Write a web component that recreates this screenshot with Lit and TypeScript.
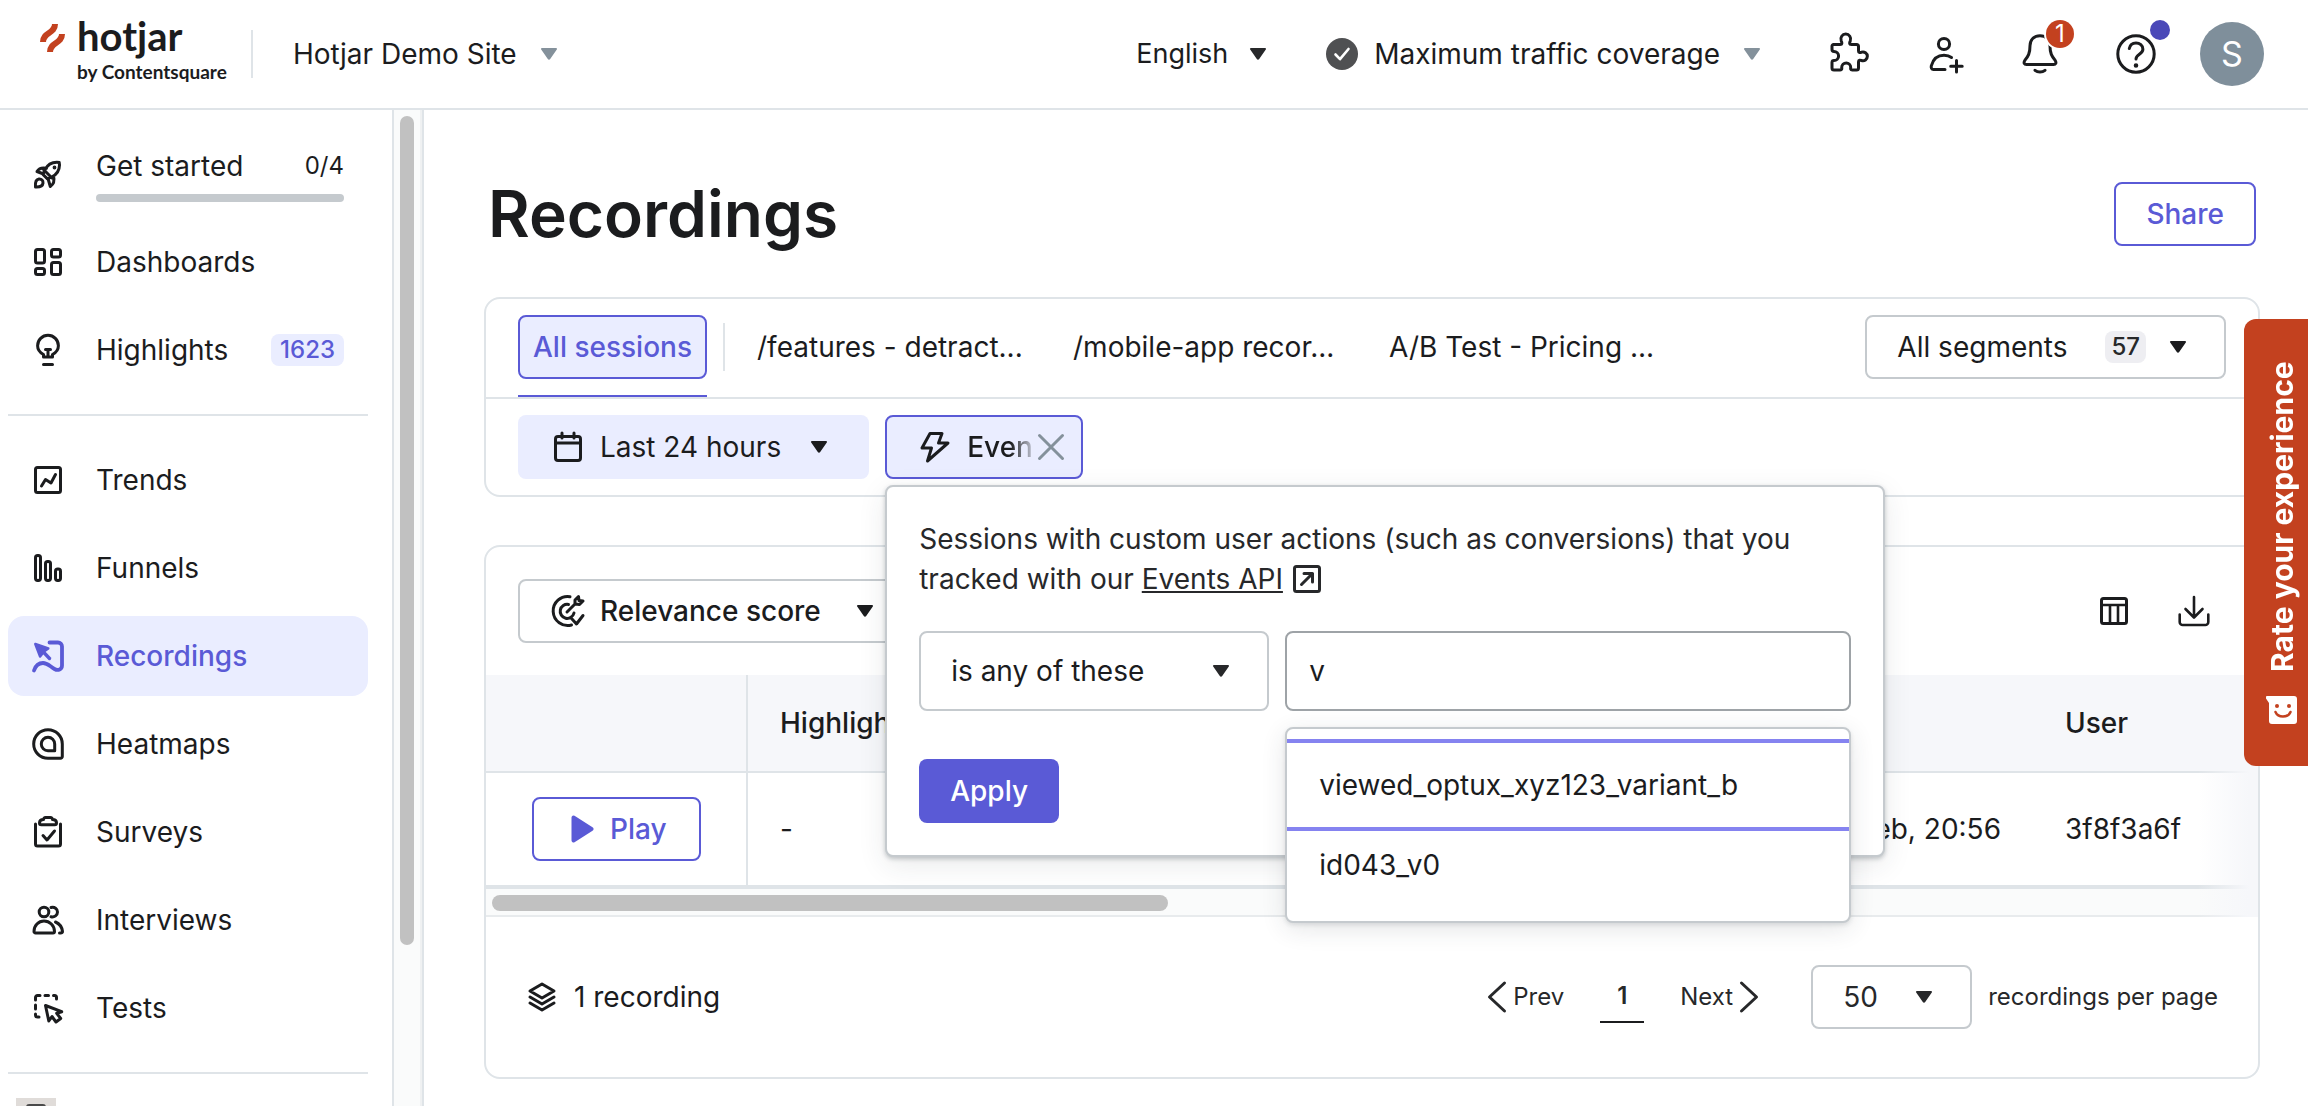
import { LitElement, html, css, svg, nothing } from "lit";
import type { TemplateResult } from "lit";
import { customElement } from "lit/decorators.js";
import { classMap } from "lit/directives/class-map.js";

const icons: Record<string, TemplateResult> = {
  rocket: svg`<g transform="translate(-1 -3)"><path d="M12 17.500c1.500-5 5-10.500 10-11.800 2-.5 4.500-.7 6.200-.2.6 1.800.3 4.200-.2 6.200-1.300 5-6.300 8.500-11.500 10.200zM12.500 17 6 14.500c1.800-3 5.500-4 9.500-3.200M17 21.500l2.300 8c3-2 4.500-5.500 3.200-10.500M12.500 12.500l8.500 8.500"/><path d="M4.500 30c-.4-4 .2-7.500 3.500-8 2.500-.2 4.200 1.700 4 4-.3 3-3.500 4.200-7.500 4z"/><circle cx="23.500" cy="10.500" r="1.300" fill="currentColor" stroke-width="1.200"/></g>`,
  dashboards: svg`<rect x="3.500" y="3.500" width="9" height="13.500" rx="2"/><rect x="19.500" y="3.500" width="9" height="7.500" rx="2"/><rect x="3.500" y="22.500" width="9" height="6" rx="2"/><rect x="19.500" y="16.500" width="9" height="12" rx="2"/>`,
  bulb: svg`<path d="M11.500 23v-2.500C8 18.500 5.600 15.500 5.600 11.700a10.400 10.400 0 0 1 20.800 0c0 3.800-2.400 6.800-5.900 8.800V23zM13.500 15.500h5M16 15.500V23M11.500 30.500h9"/>`,
  trends: svg`<rect x="3.500" y="3.500" width="25" height="25" rx="2"/><path d="m9.500 22 4-6.500 5.500 3.500 4.500-8.500"/>`,
  funnels: svg`<rect x="3.500" y="3.500" width="5" height="25" rx="2.200"/><rect x="13.500" y="9.500" width="5" height="19" rx="2.200"/><rect x="23.500" y="17" width="5" height="11.500" rx="2.200"/>`,
  recordings: svg`<path d="M17.500 2.500H26a4 4 0 0 1 4 4v19c0 4-4 5.500-7.500 3.500-5-3-7-6-11.500-6-5 0-7.500 3-9 7.500" stroke-width="3.800"/><path d="m3.300 4 13 4.500-4 2.800-4.200 5.200z" fill="currentColor" stroke-width="2.500"/><path d="m10 10.500 7.500 8" stroke-width="3.400"/>`,
  heatmaps: svg`<path d="M30.300 16v12.500a1.800 1.800 0 0 1-1.800 1.800H16A14.300 14.300 0 1 1 30.300 16z"/><path d="M22.700 16v6.700H16A6.700 6.700 0 1 1 22.700 16z"/>`,
  surveys: svg`<path d="M3.500 8v20a2 2 0 0 0 2 2h21a2 2 0 0 0 2-2V8M11.500 3.500c0-1 1-2 2-2h5c1 0 2 1 2 2 2.500 0 4 1.200 4 3.500 0 1-.7 1.800-1.800 1.800H9.300c-1.100 0-1.800-.8-1.800-1.800 0-2.300 1.500-3.500 4-3.500zM11 19.500l4 4.500 7.500-9"/>`,
  interviews: svg`<circle cx="12" cy="8" r="4.800"/><path d="M2 27.500c0-6 4.500-10.500 10-10.500s10.500 4.500 10.500 10.500c0 .8-.7 1.500-1.500 1.500H3.500C2.700 29 2 28.300 2 27.500zM19 3.500c3.500-1 6.500 1.300 6.500 4.500S22.500 13.500 19 12.800M23.500 18c3.500 1.500 6.500 5 7 9.500.1 1-.7 1.500-1.700 1.500h-1.300"/>`,
  tests: svg`<path d="M3.500 8V5.500a2 2 0 0 1 2-2H8M13 3.500h3.500M21.500 3.500h1a2 2 0 0 1 2 2V7M3.500 13v4M3.500 22v1a2 2 0 0 0 2 2h1.500"/><path d="m13.500 13.500 3.300 15.500 3.200-4.500 4 5.500 4.700-3.500-4-5.200 5-1.600z"/>`,
  calendar: svg`<rect x="3.500" y="5.500" width="25" height="24" rx="2.500"/><path d="M3.500 12h25M10 2v5M22 2v5"/>`,
  bolt: svg`<path d="M11 2.500h12l-3.500 9.500H29L8.500 30l4-13H3z"/>`,
  close: svg`<path d="m4.500 4.500 23 23M27.500 4.500l-23 23"/>`,
  target: svg`<path d="M18 1.700A14.500 14.500 0 1 0 19.500 30M16.500 9.500a7 7 0 1 0 5.500 8.500M15 17l8.500-8.500M23 9V5l3.500-3.500.5 4 4 .5L27.500 9.500zM20 24l4.500 5L31 20.500"/>`,
  external: svg`<rect x="3.500" y="3.500" width="25" height="25" rx="2"/><path d="m10.500 21.500 11-11M13 10.500h8.500V19" stroke-width="3"/>`,
  columns: svg`<rect x="3.500" y="3.500" width="25" height="25" rx="2"/><path d="M3.500 10h25M12 10v18.500M20 10v18.500" stroke-width="2.600"/>`,
  download: svg`<path d="M1.700 19.500V27a3 3 0 0 0 3 3h22.600a3 3 0 0 0 3-3v-7.500M16 2v20M7.500 14l8.500 8.500 8.500-8.500" stroke-width="2.600"/>`,
  play: svg`<path d="M6.500 4.500v23a1 1 0 0 0 1.500.8l18-11.300c.8-.5.800-1.500 0-2L8 3.700a1 1 0 0 0-1.500.8z" fill="currentColor" stroke-width="2"/>`,
  layers: svg`<path d="m16 3 12 7-12 7-12-7zM4 16l12 7 12-7M4 22l12 7 12-7"/>`,
  prev: svg`<path d="M23.500 2 8.500 16l15 14"/>`,
  next: svg`<path d="m8.500 2 15 14-15 14"/>`,
  caret: svg`<path d="M9 10h14c1 0 1.300.8.800 1.500l-6.600 9.500c-.6.900-1.800.9-2.400 0L8.200 11.500C7.700 10.800 8 10 9 10z" fill="currentColor" stroke="none"/>`,
  puzzle: svg`<path d="M5.500 10.500H12c2.500 0 2-2 1.200-3.700a4.900 4.900 0 1 1 9.100 0c-.8 1.700-1.300 3.700 1.200 3.700h5a2 2 0 0 1 2 2V17c0 2 1.500 1.600 3 1.200a4.400 4.400 0 1 1 0 8.300c-1.500-.5-3-.9-3 1.500v6a2 2 0 0 1-2 2h-4.300c-2 0-1.600-1.500-1.500-2.500a4.500 4.500 0 0 0-9 0c.1 1 .5 2.500-1.500 2.500H6a2 2 0 0 1-2-2v-5.500c0-2 1-1.900 2-1.900a4.600 4.600 0 0 0 0-9.200c-1 0-2 0-2-1.900V12a1.500 1.500 0 0 1 1.500-1.500z"/>`,
  addUser: svg`<circle cx="20" cy="10" r="5.600"/><path d="M27.500 23.500c-2-1.500-4.500-2.200-7.500-2.200-7 0-11 4.500-12.700 10.500-.4 1.700.2 3.700 2.200 3.700H21M32.500 26.500v11.500M26.700 32.300h11.500"/>`,
  bell: svg`<path d="M20 1.700c6 0 10 4 10 10 0 8 2 10.500 5 14.500 1.800 2.600.7 4.300-1.500 4.300h-27c-2.200 0-3.300-1.700-1.500-4.300 3-4 5-6.500 5-14.500 0-6 4-10 10-10zM15 36.300c2.800 2.400 7.200 2.400 10 0"/>`,
  help: svg`<circle cx="20" cy="20" r="18.200"/><path d="M13.300 14.500c.7-3.500 3.300-5.500 6.700-5.500 3.700 0 6.900 2.500 6.900 6.200 0 5-6.900 5-6.900 9.800"/><circle cx="20" cy="31.500" r="1.300" fill="currentColor" stroke-width="2"/>`,
  check: svg`<circle cx="16" cy="16" r="16" fill="#4f5052" stroke="none"/><path d="m9.500 16.500 4.500 4.700L22.500 11" stroke="#fff" stroke-width="2.600"/>`,
};

const icon = (name: string, size = 32, cls = "") => html`
  <svg class="icon ${cls}" viewBox="0 0 ${size} ${size}" width=${size} height=${size}
    fill="none" stroke="currentColor" stroke-width="3" stroke-linecap="round" stroke-linejoin="round" aria-hidden="true">${icons[name]}</svg>`;

interface NavItem { label: string; icon: string; badge?: string; active?: boolean; }

const overview: NavItem[] = [
  { label: "Dashboards", icon: "dashboards" },
  { label: "Highlights", icon: "bulb", badge: "1623" },
];
const products: NavItem[] = [
  { label: "Trends", icon: "trends" },
  { label: "Funnels", icon: "funnels" },
  { label: "Recordings", icon: "recordings", active: true },
  { label: "Heatmaps", icon: "heatmaps" },
  { label: "Surveys", icon: "surveys" },
  { label: "Interviews", icon: "interviews" },
  { label: "Tests", icon: "tests" },
];
const segments = ["/features - detract...", "/mobile-app recor...", "A/B Test - Pricing ..."];

const base = css`
  * { box-sizing: border-box; }
  button, select, input { font: inherit; color: inherit; margin: 0; }
  button { background: none; border: 0; padding: 0; cursor: pointer; display: flex; align-items: center; white-space: nowrap; }
  a { color: inherit; }
  .icon { display: block; flex: none; overflow: visible; }
  .select { display: grid; align-items: center; }
  .select select, .select .icon { grid-area: 1 / 1; }
  .select .icon { justify-self: end; pointer-events: none; color: #27282a; }
  .select select { appearance: none; background: #fff; border: 0; padding: 0; width: 100%; outline: none; }
  .select.boxed select { height: 64px; border: 2px solid #c5cace; border-radius: 8px; padding: 0 92px 0 30px; }
  .select.boxed .icon { margin-right: 32px; }
`;

@customElement("app-header")
export class AppHeader extends LitElement {
  static styles = [base, css`
    :host { display: block; flex: none; }
    .bar { height: 110px; border-bottom: 2px solid #dfe4e8; display: flex; align-items: center; padding: 0 44px 0 40px; white-space: nowrap; }
    .logo { display: flex; gap: 11px; text-decoration: none; font-family: Lato, "Open Sans", sans-serif; font-weight: 700; padding-bottom: 4px; }
    .logo svg { margin-top: 7px; flex: none; }
    .words { display: flex; flex-direction: column; width: 150px; }
    .name { font-size: 40px; line-height: 40px; }
    .by { font-size: 19px; line-height: 32px; }
    .rule { width: 2px; height: 48px; background: #dfe4e8; margin: 0 40px 0 24px; }
    .drop { gap: 16px; }
    .grey { color: #84919b; }
    .right { margin-left: auto; display: flex; align-items: center; }
    .language { width: 138px; margin-right: 52px; font-size: 27px; }
    .tools { display: flex; gap: 56px; margin: 0 44px 0 60px; }
    .tool { position: relative; }
    .count { position: absolute; left: 26px; top: -14px; width: 28px; height: 28px; border-radius: 50%; background: #c3411f; color: #fff; font-size: 24px; line-height: 28px; text-align: center; box-shadow: 0 0 0 2px #fff; }
    .dot { position: absolute; left: 34px; top: -14px; width: 20px; height: 20px; border-radius: 50%; background: #4a48b8; }
    .avatar { width: 64px; height: 64px; border-radius: 50%; background: #7f8f9b; color: #fff; font-size: 34px; justify-content: center; }
  `];
  render() {
    return html`
      <header class="bar">
        <a class="logo" href="#home">
          <svg width="26" height="30" viewBox="0 0 26 30" fill="none" stroke="#c3411f" stroke-width="6" aria-hidden="true">
            <path d="M3 19C3 9 15 11 15 1"/><path d="M10 29c0-10 12-8 12-18"/>
          </svg>
          <span class="words"><span class="name">hotjar</span><span class="by">by Contentsquare</span></span>
        </a>
        <span class="rule"></span>
        <button class="drop">Hotjar Demo Site ${icon("caret", 32, "grey")}</button>
        <div class="right">
          <div class="select language"><select aria-label="Language"><option>English</option></select>${icon("caret")}</div>
          <button class="drop">${icon("check")}Maximum traffic coverage ${icon("caret", 32, "grey")}</button>
          <div class="tools">
            <button class="tool" aria-label="Integrations">${icon("puzzle", 40)}</button>
            <button class="tool" aria-label="Invite people">${icon("addUser", 40)}</button>
            <button class="tool" aria-label="Notifications">${icon("bell", 40)}<span class="count">1</span></button>
            <button class="tool" aria-label="Help">${icon("help", 40)}<span class="dot"></span></button>
          </div>
          <button class="avatar">S</button>
        </div>
      </header>`;
  }
}

@customElement("app-sidebar")
export class AppSidebar extends LitElement {
  static styles = [base, css`
    :host { display: flex; flex: none; width: 424px; overflow: hidden; border-right: 2px solid #dfe4e8; }
    nav { flex: 1; min-width: 0; padding: 24px 24px 0 8px; display: flex; flex-direction: column; gap: 8px; }
    .item { flex: none; height: 80px; border-radius: 16px; padding: 0 24px; display: flex; align-items: center; gap: 32px; text-decoration: none; }
    .item.active { background: #eaedff; color: #5a5ad6; font-weight: 500; }
    .start { padding: 16px 24px 12px; }
    .progress { flex: 1; display: flex; flex-direction: column; gap: 12px; }
    .line { display: flex; justify-content: space-between; align-items: center; line-height: 32px; }
    .small { font-size: 24px; }
    .meter { height: 8px; border-radius: 4px; background: #c5cace; }
    .badge { margin-left: auto; height: 32px; line-height: 32px; padding: 0 9px; border-radius: 8px; background: #eaedff; color: #5a5ad6; font-size: 24px; font-weight: 500; }
    .divider { flex: none; height: 2px; background: #dfe4e8; margin: 16px 0; }
    .thumb { display: block; flex: none; margin-left: 8px; }
    .track { width: 30px; border-left: 2px solid #dfe4e8; border-right: 2px solid #eff1f2; background: #fafbfb; padding: 6px; }
    .handle { height: calc(100% - 155px); border-radius: 8px; background: #c1c1c1; }
  `];
  private item(n: NavItem) {
    return html`<a class=${classMap({ item: true, active: !!n.active })} href="#${n.label.toLowerCase()}">
      ${icon(n.icon)}<span>${n.label}</span>${n.badge ? html`<span class="badge">${n.badge}</span>` : nothing}</a>`;
  }
  render() {
    return html`
      <nav aria-label="Main">
        <a class="item start" href="#get-started">
          ${icon("rocket")}
          <span class="progress"><span class="line"><span>Get started</span><span class="small">0/4</span></span><span class="meter"></span></span>
        </a>
        ${overview.map((n) => this.item(n))}
        <div class="divider"></div>
        ${products.map((n) => this.item(n))}
        <div class="divider"></div>
        <svg class="thumb" width="40" height="40" viewBox="0 0 40 40" aria-hidden="true"><path fill="#e0dcd9" d="M0 0h40v40H0z"/><rect x="10" y="6" width="20" height="30" rx="3" fill="#4a4a4a"/></svg>
      </nav>
      <div class="track"><div class="handle"></div></div>`;
  }
}

@customElement("event-popover")
export class EventPopover extends LitElement {
  static styles = [base, css`
    :host { display: block; padding: 32px; background: #fff; border: 2px solid #c5cace; border-radius: 8px; box-shadow: 0 2px 4px rgba(40, 50, 60, .25), 0 8px 28px rgba(40, 50, 60, .1); color: #1b1c1e; }
    p { margin: 0 0 32px; line-height: 40px; color: #27282a; }
    p .icon { display: inline-block; vertical-align: -6px; }
    .fields { display: flex; gap: 16px; margin-bottom: 48px; }
    .select { flex: 0 0 350px; }
    .select.boxed select { height: 80px; }
    .box { flex: 1; position: relative; }
    input { width: 100%; height: 80px; border: 2px solid #9ea3a7; border-radius: 8px; padding: 0 22px; background: #fff; outline: none; display: block; }
    ul { position: absolute; left: 0; right: 0; top: 96px; margin: 0; padding: 16px 0; list-style: none; overflow: hidden; background: #fff; border: 2px solid #c5cace; border-radius: 8px; box-shadow: 0 2px 4px rgba(40, 50, 60, .12), 0 6px 24px rgba(40, 50, 60, .12); }
    li { height: 80px; line-height: 80px; padding: 0 32px; }
    li.current { outline: 4px solid #8583f0; outline-offset: 2px; }
    .apply { height: 64px; padding: 0 31px; border-radius: 8px; background: #5a5ad6; color: #fff; font-weight: 500; }
  `];
  render() {
    return html`
      <p>Sessions with custom user actions (such as conversions) that you tracked with our <a href="#events-api">Events API</a> ${icon("external")}</p>
      <div class="fields">
        <div class="select boxed"><select aria-label="Condition"><option>is any of these</option></select>${icon("caret")}</div>
        <div class="box">
          <input type="text" aria-label="Event name" .value=${"v"}>
          <ul role="listbox">
            <li class="current" role="option" aria-selected="true">viewed_optux_xyz123_variant_b</li>
            <li role="option" aria-selected="false">id043_v0</li>
          </ul>
        </div>
      </div>
      <button class="apply">Apply</button>`;
  }
}

@customElement("app-root")
export class AppRoot extends LitElement {
  static styles = [base, css`
    :host { display: flex; flex-direction: column; height: 100vh; overflow: hidden; position: relative; background: #fff; color: #1b1c1e; font-family: Inter, "Liberation Sans", sans-serif; font-size: 28px; line-height: 40px; }
    .body { flex: 1; min-height: 0; display: flex; }
    main { flex: 1; min-width: 0; padding: 72px 48px 0 60px; }
    .title { display: flex; align-items: center; justify-content: space-between; height: 64px; margin-bottom: 51px; padding: 0 4px; }
    h1 { margin: 0; font-size: 64px; line-height: 64px; font-weight: 600; }
    .outlined { height: 64px; border: 2px solid #5a5ad6; border-radius: 8px; color: #5a5ad6; font-weight: 500; padding: 0 30px; gap: 12px; }
    .outlined.wide { padding: 0 32px; }
    .panel { border: 2px solid #dfe4e8; border-radius: 16px; }
    .panel + .panel { margin-top: 48px; }
    .row { display: flex; align-items: center; }
    .tabs { height: 100px; padding: 0 32px 2px; border-bottom: 2px solid #dfe4e8; }
    .all { align-self: stretch; display: flex; align-items: center; border-bottom: 2px solid #5a5ad6; margin-bottom: -2px; }
    .all button { height: 64px; padding: 0 13px; border: 2px solid #5a5ad6; border-radius: 8px; background: #eaedff; color: #5a5ad6; font-weight: 500; }
    .sep { width: 2px; height: 48px; background: #dfe4e8; margin: 0 32px 0 16px; }
    .tab { width: 268px; margin-right: 48px; }
    .boxed-btn { height: 64px; border: 2px solid #c5cace; border-radius: 8px; padding: 0 30px; gap: 16px; }
    .segments { margin-left: auto; }
    .num { height: 32px; line-height: 32px; padding: 0 6px; border-radius: 8px; background: #eeeef2; color: #27282a; font-size: 24px; font-weight: 500; margin-left: 22px; }
    .filters { height: 96px; padding: 0 32px; gap: 16px; }
    .filter { height: 64px; border-radius: 8px; background: #eaedff; padding: 0 34px; gap: 16px; }
    .filter .caret { margin-left: 6px; }
    .sort .caret { margin-left: 12px; }
    .chip { position: relative; z-index: 2; }
    .chip-body { height: 64px; display: flex; align-items: center; border: 2px solid #5a5ad6; border-radius: 8px; background: #eaedff; padding: 0 14px 0 32px; gap: 4px; }
    .chip-body button { gap: 16px; }
    .fade { width: 64px; overflow: hidden; font-weight: 500; -webkit-mask-image: linear-gradient(90deg, #000 68%, rgba(0, 0, 0, .25)); mask-image: linear-gradient(90deg, #000 68%, rgba(0, 0, 0, .25)); }
    .close { color: #84919b; }
    event-popover { position: absolute; left: 0; top: 70px; width: 1000px; }
    .toolbar { height: 128px; padding: 0 48px 0 32px; gap: 48px; }
    .sort { font-weight: 500; padding: 0 32px; }
    .tool-a { margin-left: auto; }
    .grid { position: relative; }
    .grid::after { content: ""; position: absolute; top: 0; right: 0; bottom: 0; width: 60px; background: linear-gradient(90deg, rgba(246, 247, 250, 0), #f6f7fa 85%); pointer-events: none; }
    table { width: 100%; table-layout: fixed; border-collapse: separate; border-spacing: 0; }
    th, td { text-align: left; padding: 0 32px; border-bottom: 2px solid #dfe4e8; white-space: nowrap; }
    th { height: 98px; background: #f6f7fa; font-weight: 500; }
    td { height: 116px; border-bottom-width: 4px; }
    .c-play { width: 262px; border-right: 2px solid #dfe4e8; padding: 0 46px; }
    .c-date { width: 240px; text-align: right; }
    .c-user { width: 225px; }
    .scroll { height: 28px; padding: 6px; background: #fafbfb; border-bottom: 2px solid #e8ebed; }
    .handle { width: 38.4%; height: 16px; border-radius: 8px; background: #c1c1c1; }
    .foot { height: 160px; padding: 0 40px; }
    .total { display: flex; align-items: center; gap: 16px; }
    .pager { margin-left: auto; display: flex; align-items: center; font-size: 24px; color: #27282a; }
    .page { height: 52px; width: 44px; border-bottom: 2px solid #1b1c1e; justify-content: center; font-weight: 600; margin: 0 36px; }
    .per { display: flex; align-items: center; gap: 16px; margin-left: 46px; }
    .per select { font-size: 28px; }
    .rate { position: absolute; right: 0; top: 319px; z-index: 3; width: 64px; height: 447px; background: #c3411f; color: #fff; border-radius: 0 12px 12px 0; writing-mode: vertical-rl; transform: rotate(180deg); font-size: 30px; font-weight: 700; gap: 22px; padding: 40px 12px 40px 0; }
    .rate svg { transform: rotate(180deg); flex: none; }
  `];
  render() {
    return html`
      <app-header></app-header>
      <div class="body">
        <app-sidebar></app-sidebar>
        <main>
          <div class="title"><h1>Recordings</h1><button class="outlined">Share</button></div>
          <section class="panel">
            <div class="row tabs">
              <div class="all"><button>All sessions</button></div>
              <span class="sep"></span>
              ${segments.map((s) => html`<button class="tab">${s}</button>`)}
              <button class="boxed-btn segments">All segments <span class="num">57</span>${icon("caret")}</button>
            </div>
            <div class="row filters">
              <button class="filter">${icon("calendar")}Last 24 hours ${icon("caret", 32, "caret")}</button>
              <div class="chip">
                <div class="chip-body">
                  <button>${icon("bolt")}<span class="fade">Events</span></button>
                  <button class="close" aria-label="Remove filter">${icon("close")}</button>
                </div>
                <event-popover></event-popover>
              </div>
            </div>
          </section>
          <section class="panel">
            <div class="row toolbar">
              <button class="boxed-btn sort">${icon("target")}Relevance score ${icon("caret", 32, "caret")}</button>
              <button class="tool-a" aria-label="Edit columns">${icon("columns")}</button>
              <button aria-label="Download">${icon("download")}</button>
            </div>
            <div class="grid">
              <table>
                <thead><tr><th class="c-play" aria-label="Play"></th><th>Highlights</th><th class="c-date" aria-label="Date"></th><th class="c-user">User</th></tr></thead>
                <tbody><tr>
                  <td class="c-play"><button class="outlined wide">${icon("play")}Play</button></td>
                  <td>-</td><td class="c-date">Feb, 20:56</td><td class="c-user">3f8f3a6f</td>
                </tr></tbody>
              </table>
              <div class="scroll"><div class="handle"></div></div>
            </div>
            <div class="row foot">
              <span class="total">${icon("layers")}<span>1 recording</span></span>
              <div class="pager">
                <button>${icon("prev")}Prev</button>
                <button class="page">1</button>
                <button>Next${icon("next")}</button>
                <label class="per"><span class="select boxed"><select><option>50</option></select>${icon("caret")}</span>recordings per page</label>
              </div>
            </div>
          </section>
        </main>
      </div>
      <button class="rate">
        <svg width="32" height="32" viewBox="0 0 32 32" aria-hidden="true"><path fill="#fff" d="M1 2h27a3 3 0 0 1 3 3v22a3 3 0 0 1-3 3H6a3 3 0 0 1-3-3V9L0 4.500C-.6 3.300 0 2 1 2z"/><circle cx="11" cy="12" r="2" fill="#c3411f"/><circle cx="23" cy="12" r="2" fill="#c3411f"/><path d="M9.500 18c2.500 6 12.500 6 15 0" fill="none" stroke="#c3411f" stroke-width="2.500" stroke-linecap="round"/></svg>
        <span>Rate your experience</span>
      </button>`;
  }
}
